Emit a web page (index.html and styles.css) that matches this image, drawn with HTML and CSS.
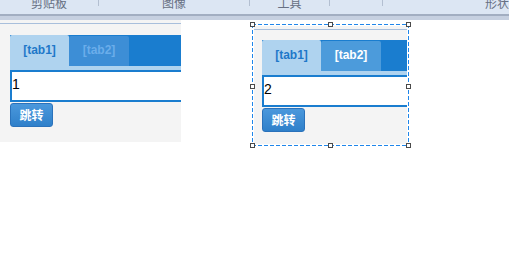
FILE: index.html
```html
<!DOCTYPE html>
<html lang="zh-CN">
  <head>
    <meta charset="UTF-8" />
    <title>tabs</title>
    <link rel="stylesheet" href="styles.css">
  </head>
  <body>
    <div class="ribbon">
      <div class="groups">
        <div class="grp g1"><span>剪贴板</span></div>
        <i class="sep"></i>
        <div class="grp g2"><span>图像</span></div>
        <i class="sep"></i>
        <div class="grp g3"><span>工具</span></div>
        <i class="sep"></i>
        <div class="grp g4"></div>
        <i class="sep"></i>
        <div class="grp g5"><span>形状</span></div>
      </div>
      <div class="edge"></div>
    </div>

    <div class="stage">
      <div class="panel left">
        <div class="inner">
          <div class="tabs">
            <div class="tab t1">[tab1]</div>
            <div class="tab t2">[tab2]</div>
          </div>
          <div class="field">1</div>
          <div class="btn">跳转</div>
        </div>
      </div>

      <div class="selbox">
        <div class="panel right">
          <div class="inner">
            <div class="tabs">
              <div class="tab t1">[tab1]</div>
              <div class="tab t2 on">[tab2]</div>
            </div>
            <div class="field">2</div>
            <div class="btn">跳转</div>
          </div>
        </div>
        <span class="handle h-tl"></span>
        <span class="handle h-tc"></span>
        <span class="handle h-tr"></span>
        <span class="handle h-ml"></span>
        <span class="handle h-mr"></span>
        <span class="handle h-bl"></span>
        <span class="handle h-bc"></span>
        <span class="handle h-br"></span>
      </div>
    </div>
  </body>
</html>
```

FILE: styles.css
```css
body {
  margin: 0;
  width: 509px;
  height: 259px;
  background: #fff;
  overflow: hidden;
  font-family: "Liberation Sans", "Noto Sans CJK SC", sans-serif;
}

/* ribbon strip */
.ribbon {
  overflow: hidden;
}
.groups {
  display: flex;
  height: 14px;
  background: #dce6f3;
  overflow: hidden;
}
.grp {
  flex: none;
  text-align: center;
  white-space: nowrap;
}
.grp span {
  display: block;
  margin-top: -3px;
  font-family: "Noto Sans CJK SC", sans-serif;
  font-size: 12px;
  line-height: 12px;
  color: #677083;
}
.g1 { width: 98px; }
.g2 { width: 150px; }
.g3 { width: 79px; }
.g4 { width: 52px; }
.g5 {
  width: 140px;
  padding-left: 102px;
  text-align: left;
}
.sep {
  flex: none;
  width: 1px;
  height: 6px;
  background: #b3bfd1;
}
.edge {
  height: 4px;
  border-top: 2px solid #a2aec1;
  background: #c6d0e0;
}

/* widgets */
.stage {
  display: flex;
  align-items: flex-start;
}
.panel {
  background: #f4f4f4;
  padding-top: 3px;
  overflow: hidden;
  box-sizing: border-box;
}
.panel .inner {
  border-top: 1px solid #a8bfdc;
  padding: 11px 0 0 10px;
}
.left {
  width: 181px;
  height: 122px;
}
.right {
  height: 118px;
}
.right .inner {
  padding: 10px 0 0 8px;
}

.tabs {
  display: flex;
  height: 31px;
  background: #1a7dcf;
  border-bottom: 4px solid #afd3ef;
}
.tab {
  height: 31px;
  line-height: 31px;
  text-align: center;
  font-size: 12px;
  font-weight: 700;
  border-radius: 2px 2px 0 0;
}
.t1 {
  width: 59px;
  background: #afd3ef;
  color: #1e78c9;
}
.t2 {
  width: 60px;
  height: 30px;
  margin-top: 1px;
  line-height: 29px;
  background: #3d8ed6;
  color: #6badea;
}
.t2.on {
  background: #4c9bdb;
  color: #fff;
}

.field {
  height: 32px;
  box-sizing: border-box;
  border: 2px solid #1a7dcf;
  border-right: none;
  background: #fff;
  padding-top: 4px;
  font-size: 14px;
  line-height: 16px;
  color: #000;
}

.btn {
  width: 43px;
  height: 24px;
  margin-top: 1px;
  box-sizing: border-box;
  border: 1px solid #2a72bb;
  border-radius: 3px;
  background: linear-gradient(#4a98dc, #2f80ca);
  color: #fff;
  font-family: "Noto Sans CJK SC", sans-serif;
  font-weight: 700;
  font-size: 12px;
  line-height: 21px;
  text-align: center;
}

/* selection frame, 4px dash / 2px gap */
.selbox {
  position: relative;
  width: 157px;
  height: 122px;
  margin: 4px 0 0 71px;
  padding: 2px;
  box-sizing: border-box;
  background:
    repeating-linear-gradient(90deg, #1f86ea 0 4px, transparent 4px 6px) top / 100% 1px no-repeat,
    repeating-linear-gradient(90deg, #1f86ea 0 4px, transparent 4px 6px) bottom / 100% 1px no-repeat,
    repeating-linear-gradient(180deg, #1f86ea 0 4px, transparent 4px 6px) left / 1px 100% no-repeat,
    repeating-linear-gradient(180deg, #1f86ea 0 4px, transparent 4px 6px) right / 1px 100% no-repeat;
}
.handle {
  position: absolute;
  width: 5px;
  height: 5px;
  box-sizing: border-box;
  border: 1px solid #4a4a4a;
  background: #fff;
}
.h-tl { left: -2px; top: -2px; }
.h-tc { left: 76px; top: -2px; }
.h-tr { left: 154px; top: -2px; }
.h-ml { left: -2px; top: 60px; }
.h-mr { left: 154px; top: 60px; }
.h-bl { left: -2px; top: 119px; }
.h-bc { left: 76px; top: 119px; }
.h-br { left: 154px; top: 119px; }
```
